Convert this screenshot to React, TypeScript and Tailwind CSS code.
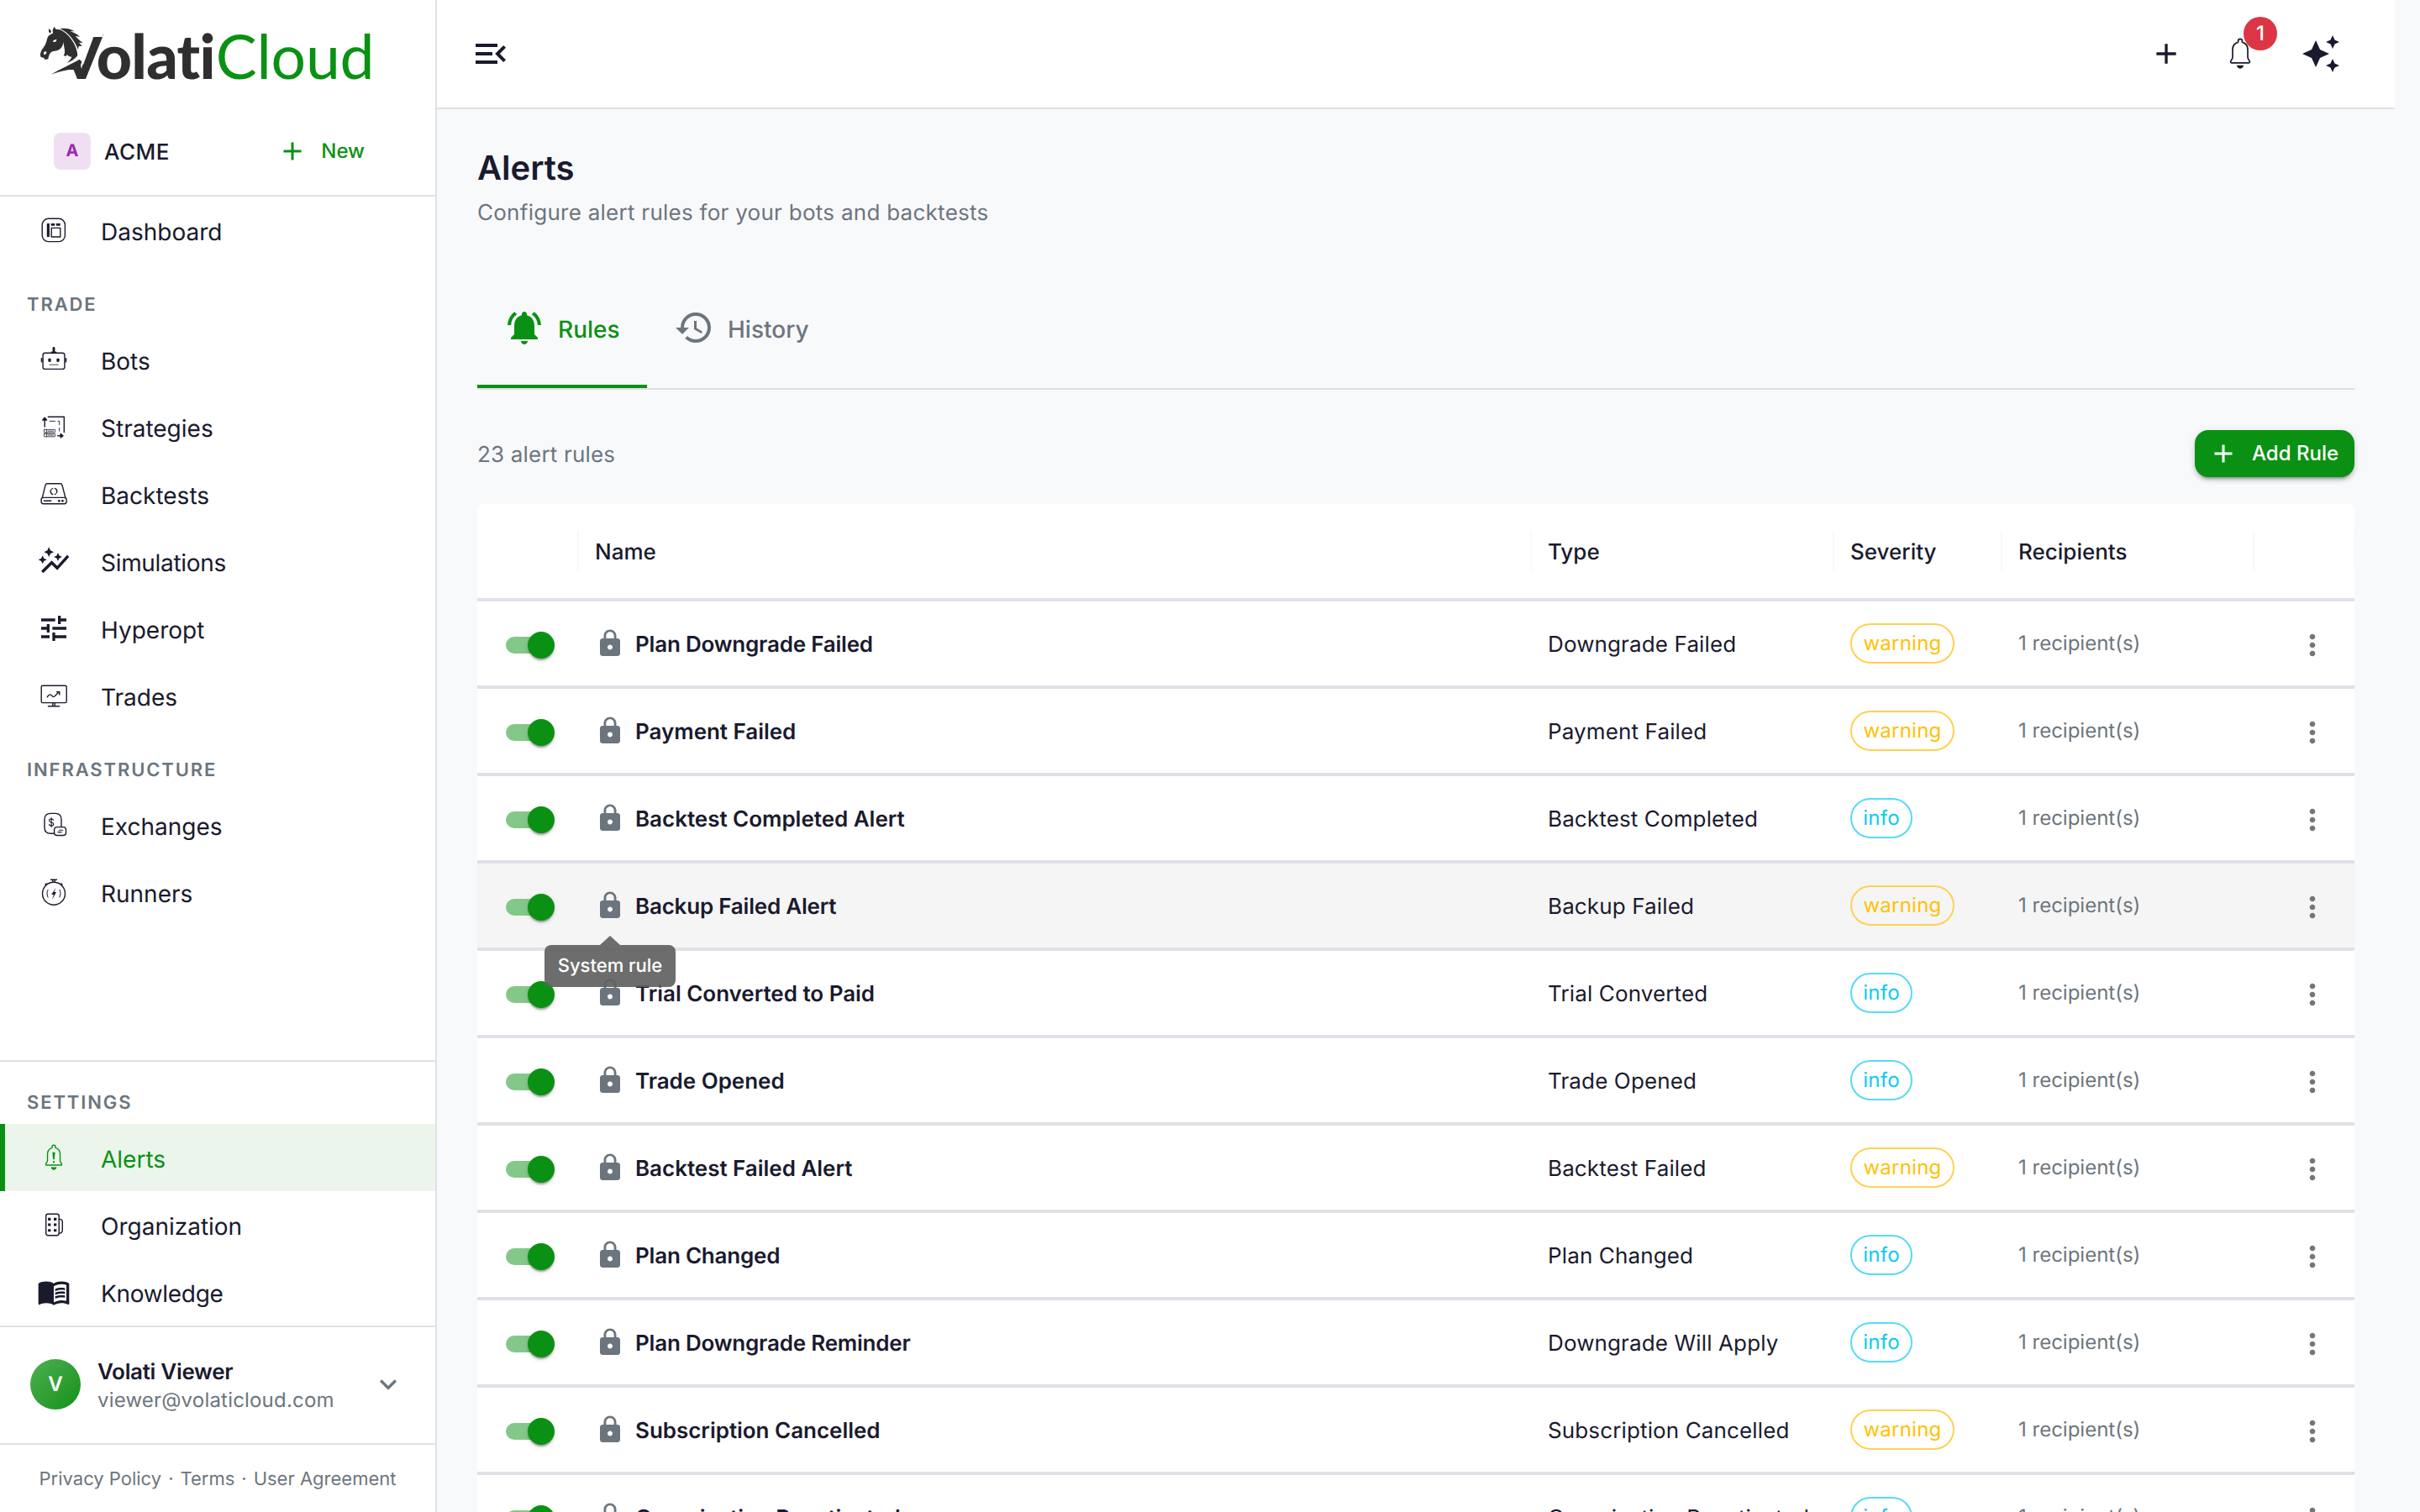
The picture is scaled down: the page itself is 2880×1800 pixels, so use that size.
import type { ReactNode } from 'react';
import {
    MdAdd,
    MdAutoAwesome,
    MdAutoGraph,
    MdHistory,
    MdKeyboardArrowDown,
    MdLock,
    MdMenuBook,
    MdMenuOpen,
    MdMoreVert,
    MdNotificationsActive,
    MdTune,
} from 'react-icons/md';

type Severity = 'warning' | 'info';

interface AlertRule {
    name: string;
    type: string;
    severity: Severity;
    tight?: boolean;
    hovered?: boolean;
}

const rules: AlertRule[] = [
    { name: 'Plan Downgrade Failed', type: 'Downgrade Failed', severity: 'warning', tight: true },
    { name: 'Payment Failed', type: 'Payment Failed', severity: 'warning' },
    { name: 'Backtest Completed Alert', type: 'Backtest Completed', severity: 'info' },
    { name: 'Backup Failed Alert', type: 'Backup Failed', severity: 'warning', tight: true, hovered: true },
    { name: 'Trial Converted to Paid', type: 'Trial Converted', severity: 'info' },
    { name: 'Trade Opened', type: 'Trade Opened', severity: 'info' },
    { name: 'Backtest Failed Alert', type: 'Backtest Failed', severity: 'warning' },
    { name: 'Plan Changed', type: 'Plan Changed', severity: 'info', tight: true },
    { name: 'Plan Downgrade Reminder', type: 'Downgrade Will Apply', severity: 'info', tight: true },
    { name: 'Subscription Cancelled', type: 'Subscription Cancelled', severity: 'warning' },
    { name: 'Organization Reactivated', type: 'Organization Reactivated', severity: 'info' },
];

function Icon({ children, className = 'size-10' }: { children: ReactNode; className?: string }) {
    return (
        <svg className={className} viewBox="0 0 40 40" fill="none" stroke="currentColor" strokeWidth="1.4" strokeLinecap="round" strokeLinejoin="round">
            {children}
        </svg>
    );
}

const DashboardIcon = () => (
    <Icon>
        <rect x="6.2" y="6.2" width="27.2" height="27.4" rx="7.5" />
        <path d="M11.8 12h3.1v16h-3.1zM16.7 12h4.6v2.7h-4.6zM22.9 12h4.8v2.7h-4.8z" fill="currentColor" stroke="none" />
        <rect x="17.2" y="17.4" width="10.6" height="10.6" />
    </Icon>
);

const BotIcon = () => (
    <Icon>
        <rect x="7.1" y="12.2" width="25.8" height="19.2" rx="2.4" />
        <path d="M5.6 18.8v3.8M34.4 18.8v3.8" strokeWidth="1.8" />
        <path d="M20 6.3v5" strokeWidth="2.8" />
        <path d="M17.6 11.4h4.8" strokeWidth="2" />
        <ellipse cx="15" cy="20.8" rx="1.8" ry="2.3" fill="currentColor" stroke="none" />
        <ellipse cx="25" cy="20.8" rx="1.8" ry="2.3" fill="currentColor" stroke="none" />
        <path d="M15 26.2h10" strokeWidth="0.8" />
    </Icon>
);

const StrategyIcon = () => (
    <Icon>
        <path d="M13.3 8.2h19v18.4" />
        <path d="M9.2 20V10.5" />
        <path d="M9.2 9.2 6.8 12h4.8zM31 30.7l-2.8-2.2v4.4z" fill="currentColor" />
        <path d="M24.8 30.7h4" strokeWidth="1.6" />
        <path d="M15.3 13.4h6.2M25 13.4h1.7v4.4M26.7 21.4v3.8" strokeWidth="0.9" />
        <g strokeWidth="0.8">
            <rect x="8.4" y="23.4" width="13.2" height="3.6" rx="0.6" />
            <rect x="8.4" y="28.2" width="13.2" height="3.6" rx="0.6" />
            <path d="M11.4 23.4V27M11.4 28.2v3.6M13 25.2h6.6M13 30h6.6" />
        </g>
    </Icon>
);

const BacktestIcon = () => (
    <Icon>
        <path d="M6.4 24.2 10 9.6c.3-1.1 1-1.8 2.2-1.8h15.6c1.2 0 1.9.7 2.2 1.8l3.8 14.6" />
        <rect x="5.1" y="24.4" width="30" height="7.3" rx="2.4" />
        <path d="M8.4 28.3h8.4" />
        <circle cx="26.3" cy="28.3" r="1.4" fill="currentColor" stroke="none" />
        <circle cx="30.4" cy="28.3" r="1.4" fill="currentColor" stroke="none" />
        <path d="M21.3 13.4c1.5.5 2.5 1.8 2.5 3.5 0 .7-.2 1.3-.5 1.9M18.6 20.5c-1.4-.5-2.4-1.9-2.4-3.5 0-.7.2-1.300.5-1.900M17.800 14l.9-.5M21.300 20.500l.9-.5" />
    </Icon>
);

const TradesIcon = () => (
    <Icon>
        <rect x="5.2" y="8.2" width="30" height="20.4" rx="1.6" />
        <path d="M18.8 28.8v3.4M21.2 28.8v3.4M13.4 32.8h13.2" />
        <path d="M12.2 21.8c1.6-2.4 3-3.6 4.4-2.6l2 1.8c1 .8 1.9.6 2.8-.4l5-5M23.4 15.6h3.4V19" />
    </Icon>
);

const ExchangeIcon = () => (
    <Icon>
        <path d="M20.2 30.2h-4c-5 0-7.2-2.4-7.2-7.3v-9.2c0-5 2.2-7.3 7.2-7.3h5.6c5 0 7.2 2.4 7.2 7.3v8.5" />
        <rect x="20.6" y="22.6" width="13.9" height="9.9" rx="3.2" />
        <path d="M19.5 14.4c-.2-1-1.1-1.5-2.4-1.5-1.5 0-2.5.8-2.5 2 0 2.8 5.2 1.4 5.2 4.2 0 1.2-1.1 2-2.6 2s-2.5-.7-2.7-1.8M17.1 11.6v10.8" strokeWidth="1.1" />
        <path d="M26.2 26.3h4.4M24.8 28.6h4.4" strokeWidth="1.1" />
    </Icon>
);

const RunnerIcon = () => (
    <Icon>
        <circle cx="20" cy="21.8" r="13.5" />
        <path d="M16.5 5.2h7M18.8 5.4v2.8M21.2 5.4v2.8M10.3 12.2v-2.1h1.8M29.7 12.2v-2.1h-1.8" />
        <path d="m22.7 14.4-5.5 8.5h2.7L18 29l5-8.9h-2.6z" fill="currentColor" stroke="none" />
        <path d="M13 17.4c-1.3 2.9-1.3 5.8 0 8.7M27 17.4c1.3 2.9 1.3 5.8 0 8.7" strokeWidth="1" />
    </Icon>
);

function BellIcon({ alert = false, className }: { alert?: boolean; className?: string }) {
    return (
        <Icon className={className}>
            <path d="M18 8.4V7.3c0-1.2.9-2 2-2s2 .8 2 2v1.1c3.6 1.1 5.5 3.7 5.5 7.5v7.5c0 1.2.4 1.9 1.2 2.9.5.7.8 1.3.8 1.9 0 .5-.3.8-.8.8H11.3c-.5 0-.8-.3-.8-.8 0-.6.3-1.2.8-1.9.8-1 1.2-1.7 1.2-2.9v-7.5c0-3.8 1.9-6.4 5.5-7.5z" />
            <path d="M16.5 31.5h7c-.4 2-1.6 3.2-3.5 3.2s-3.1-1.2-3.5-3.2z" fill="currentColor" stroke="none" />
            {alert && <path d="M18.4 13.8h3.2l-.8 8.5h-1.6zM19 24.2h2v2h-2z" fill="currentColor" stroke="none" />}
        </Icon>
    );
}

const OrganizationIcon = () => (
    <Icon>
        <rect x="10.7" y="7.2" width="15.5" height="25.5" rx="2.4" />
        <path d="M26.4 13.2c2.5.2 3.9 1.2 3.9 3.4v10c0 2.3-1.4 3.6-3.9 3.8" />
        <path d="M13.1 11.8h3.3v3.1h-3.3zM20 11.8h3.3v3.1H20zM13.1 18.5h3.3v3.1h-3.3zM20 18.5h3.3v3.1H20zM13.1 25.2h3.3v3.1h-3.3zM20 25.2h3.3v3.1H20z" fill="currentColor" stroke="none" />
    </Icon>
);

function Logo() {
    return (
        <svg className="h-[90px] w-[410px]" viewBox="0 0 1230 270">
            <defs>
                {/* the horse's neck replaces the left arm of the V */}
                <clipPath id="v-clip">
                    <path d="M214 72h34V40h420v195H155l-17-47 25-36 14 20z" />
                </clipPath>
            </defs>
            <g fill="#2f2f2f">
                <path d="M73 36l8 9c12-1 24 4 36 16 22 20 38 48 40 77-8 12-22 22-38 26 8-7 14-13 17-21-7 0-13-3-17-9l-2 7-10-3c5-7 5-15 3-25-2-9-3-17-3-24-2 14-8 25-20 30-9 4-18 2-25 8-6 5-8 13-10 24l-11 2-5-7-9-1c-4-5-4-12-1-20 3-9 11-17 16-27 5-9 5-19 10-28 4-5 10-8 17-11l-1-12z" />
                <path d="M54 42l9 8-3 9-6-5z" />
                <path d="M94 42c18-2 36-1 52 10l-16-1c10 5 24 8 35 21l-16-4c8 9 15 16 27 25l-14-1 11 12-12 1-2 12C148 89 128 58 94 42z" />
                <path d="M62 206c38-22 74-38 102-54l8 8-10 34c-28-12-60-1-100 12z" />
                <text x="94 224" y="223" fontFamily="Lato" fontWeight="900" fontSize="220" letterSpacing="-2.2" clipPath="url(#v-clip)">Volati</text>
            </g>
            <path d="M70 84l13-4-4 9-9 1zM36 126c5-4 11-3 10 2s-7 9-10 6z" fill="#fff" />
            <text x="650" y="223" fontFamily="Lato" fontSize="220" textLength="567" fill="#0a9113">Cloud</text>
        </svg>
    );
}

interface NavItemProps {
    icon: ReactNode;
    label: string;
    active?: boolean;
    tight?: boolean;
}

function NavItem({ icon, label, active = false, tight = false }: NavItemProps) {
    return (
        <a className={`flex h-20 shrink-0 items-center pl-11 ${active ? 'bg-[#ebf5ec] text-[#0a9113] shadow-[inset_6px_0_0_#0a9113]' : ''}`}>
            <span className="mr-9 text-[40px]">{icon}</span>
            <span className={`pt-[3px] text-[28px] leading-10 ${tight ? 'tracking-[-0.011em]' : ''}`}>{label}</span>
        </a>
    );
}

function NavHeader({ label }: { label: string }) {
    return <div className="h-[74px] shrink-0 pt-[38px] pl-8 text-[22px] leading-[22px] font-semibold tracking-[0.086em] text-[#6c757d]">{label}</div>;
}

function Sidebar() {
    return (
        <aside className="flex h-full w-[520px] shrink-0 flex-col border-r-2 border-[#dee2e6] bg-white">
            <div className="h-32 shrink-0 pt-5 pl-10">
                <Logo />
            </div>
            <div className="flex h-[106px] shrink-0 items-center border-b-2 border-[#dee2e6] pl-16">
                <span className="flex size-11 items-center justify-center rounded-lg bg-[#f0dff3] pb-0.5 text-xl font-bold text-[#9c27b0]">A</span>
                <span className="ml-4 pt-0.5 text-[26px] font-medium tracking-[0.02em]">ACME</span>
                <span className="mr-[84px] ml-auto flex items-center gap-4 text-2xl font-medium text-[#0a9113]">
                    <MdAdd className="size-9" />
                    New
                </span>
            </div>

            <nav className="flex flex-1 flex-col">
                <NavItem icon={<DashboardIcon />} label="Dashboard" />
                <NavHeader label="TRADE" />
                <NavItem icon={<BotIcon />} label="Bots" />
                <NavItem icon={<StrategyIcon />} label="Strategies" />
                <NavItem icon={<BacktestIcon />} label="Backtests" />
                <NavItem icon={<MdAutoGraph />} label="Simulations" tight />
                <NavItem icon={<MdTune />} label="Hyperopt" />
                <NavItem icon={<TradesIcon />} label="Trades" />
                <NavHeader label="INFRASTRUCTURE" />
                <NavItem icon={<ExchangeIcon />} label="Exchanges" />
                <NavItem icon={<RunnerIcon />} label="Runners" />
            </nav>

            <div className="flex shrink-0 flex-col border-t-2 border-[#dee2e6]">
                <NavHeader label="SETTINGS" />
                <NavItem icon={<BellIcon alert />} label="Alerts" active />
                <NavItem icon={<OrganizationIcon />} label="Organization" />
                <NavItem icon={<MdMenuBook />} label="Knowledge" tight />
            </div>

            <div className="flex h-[140px] shrink-0 items-center border-t-2 border-[#dee2e6] px-9 pb-0.5">
                <span className="flex size-[60px] items-center justify-center rounded-full bg-linear-135 from-[#4caf50] to-[#0a9113] text-2xl font-semibold text-white">V</span>
                <div className="ml-5 pt-[3px]">
                    <div className="text-[26px] leading-[34px] font-semibold tracking-[-0.012em]">Volati Viewer</div>
                    <div className="text-2xl leading-8 tracking-[0.008em] text-[#6c757d]">viewer@volaticloud.com</div>
                </div>
                <MdKeyboardArrowDown className="ml-auto size-10 text-[#6c757d]" />
            </div>

            <div className="flex h-[82px] shrink-0 items-center justify-center gap-2 border-t-2 border-[#dee2e6] pt-0.5 text-[22px] text-[#6c757d]">
                <span>Privacy Policy</span>
                <span>·</span>
                <span>Terms</span>
                <span>·</span>
                <span>User Agreement</span>
            </div>
        </aside>
    );
}

function Topbar() {
    return (
        <header className="mr-[30px] flex h-[130px] shrink-0 items-center border-b-2 border-[#dee2e6] bg-white pr-16 pl-10">
            <MdMenuOpen className="size-12" />
            <MdAdd className="mr-11 ml-auto size-10" />
            <div className="relative mr-12">
                <BellIcon className="size-12" />
                <span className="absolute -top-5 left-7 flex size-10 items-center justify-center rounded-full bg-[#dc3545] text-2xl font-medium text-white">1</span>
            </div>
            <MdAutoAwesome className="size-12" />
        </header>
    );
}

function Toggle() {
    return (
        <div className="relative mt-1 ml-[34px] h-5 w-[52px] rounded-full bg-[#84c889]">
            <span className="absolute -top-1.5 left-[26px] size-8 rounded-full bg-[#0a9113] shadow-[0_4px_2px_-2px_rgba(0,0,0,0.2),0_2px_2px_rgba(0,0,0,0.14),0_2px_6px_rgba(0,0,0,0.12)]" />
        </div>
    );
}

function SeverityChip({ severity }: { severity: Severity }) {
    const color = severity === 'warning' ? 'w-[124px] border-[#ffd151] text-[#ffc107]' : 'w-[74px] border-[#56daf5] text-[#0dcaf0]';
    return <span className={`flex h-12 items-center justify-center rounded-full border-2 text-2xl tracking-[0.01em] ${color}`}>{severity}</span>;
}

function HeaderCell({ label = '' }: { label?: string }) {
    return (
        <div className="flex h-12 items-center justify-between pl-5 text-[26px] font-medium">
            <span className="pt-0.5">{label}</span>
            <span className="-mr-px ml-auto h-12 w-0.5 bg-[#f8f9fa]" />
        </div>
    );
}

function RuleRow({ rule }: { rule: AlertRule }) {
    return (
        <div className={`grid h-[104px] shrink-0 grid-cols-[120px_1134px_360px_200px_300px_120px] items-center border-b-4 border-[#dee2e6] text-[26px] ${rule.hovered ? 'bg-[#f5f5f5]' : 'bg-white'}`}>
            <Toggle />
            <div className="flex items-center gap-3 pl-5 font-semibold">
                <span className="relative text-[#6c757d]">
                    <MdLock className="size-9" />
                    {rule.hovered && (
                        <span className="absolute top-[65px] left-1/2 z-10 flex h-[50px] w-[156px] -translate-x-1/2 items-center justify-center rounded-lg bg-[#616161]/92 text-[22px] font-medium text-white">
                            <svg className="absolute -top-[11px] left-1/2 h-[11px] w-6 -translate-x-1/2 text-[#616161]/92" viewBox="0 0 24 11">
                                <path d="M0 11 12 0l12 11z" fill="currentColor" />
                            </svg>
                            System rule
                        </span>
                    )}
                </span>
                <span className={`pt-0.5 ${rule.tight ? 'tracking-[-0.008em]' : 'tracking-[-0.001em]'}`}>{rule.name}</span>
            </div>
            <div className="pt-0.5 pl-5 tracking-[0.005em]">{rule.type}</div>
            <div className="flex pl-5">
                <SeverityChip severity={rule.severity} />
            </div>
            <div className="pl-5 text-2xl text-[#6c757d]">1 recipient(s)</div>
            <MdMoreVert className="mt-1 ml-[50px] size-10 text-[#757575]" />
        </div>
    );
}

export default function App() {
    return (
        <div className="flex h-[1800px] w-[2880px] overflow-hidden bg-[#f8f9fb] font-['Inter',sans-serif] text-[#1a1a2e] [text-rendering:geometricPrecision]">
            <Sidebar />
            <main className="flex flex-1 flex-col">
                <Topbar />
                <div className="flex w-[2330px] flex-1 flex-col px-12 pt-11">
                    <h1 className="text-[40px] leading-[52px] font-semibold">Alerts</h1>
                    <p className="mt-2 text-[26px] leading-10 tracking-[0.0103em] text-[#6c757d]">Configure alert rules for your bots and backtests</p>

                    <div className="mt-11 flex shrink-0 border-b-2 border-[#dee2e6]">
                        <div className="flex h-36 w-[202px] items-center gap-4 border-b-4 border-[#0a9113] pt-1 pl-8 text-[28px] font-medium text-[#0a9113]">
                            <MdNotificationsActive className="size-12" />
                            <span className="pt-1">Rules</span>
                        </div>
                        <div className="flex h-36 items-center gap-4 px-8 text-[28px] font-medium text-[#6c757d]">
                            <MdHistory className="size-12" />
                            <span className="pt-1">History</span>
                        </div>
                    </div>

                    <div className="mt-12 mb-8 flex h-14 shrink-0 items-center justify-between">
                        <span className="pt-0.5 text-[26px] tracking-[0.007em] text-[#6c757d]">23 alert rules</span>
                        <button className="flex h-14 w-[190px] items-center gap-4 rounded-2xl bg-[#0a9113] pl-4 text-2xl font-medium whitespace-nowrap text-white shadow-[0_6px_2px_-4px_rgba(0,0,0,0.2),0_4px_4px_rgba(0,0,0,0.14),0_2px_10px_rgba(0,0,0,0.12)]">
                            <MdAdd className="size-9 shrink-0" />
                            Add Rule
                        </button>
                    </div>

                    <div className="flex flex-col">
                        <div className="grid h-[116px] shrink-0 grid-cols-[120px_1134px_360px_200px_300px_120px] items-center rounded-t-lg border-b-4 border-[#dee2e6] bg-white">
                            <HeaderCell />
                            <HeaderCell label="Name" />
                            <HeaderCell label="Type" />
                            <HeaderCell label="Severity" />
                            <HeaderCell label="Recipients" />
                            <HeaderCell />
                        </div>
                        {rules.map((rule) => (
                            <RuleRow key={rule.name} rule={rule} />
                        ))}
                    </div>
                </div>
            </main>
        </div>
    );
}
